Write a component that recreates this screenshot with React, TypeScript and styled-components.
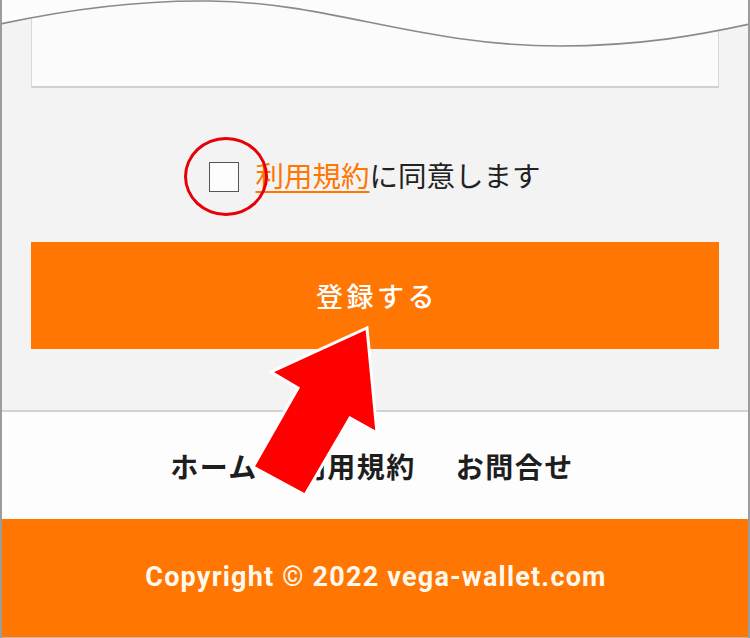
import React from "react";
import styled, { createGlobalStyle } from "styled-components";

const ORANGE = "#ff7602";

const Global = createGlobalStyle`
  html, body { margin: 0; padding: 0; background: #fcfcfc; }
  body { width: 750px; height: 638px; overflow: hidden; }
  * { box-sizing: border-box; }
`;

const Page = styled.div`
  position: relative;
  width: 750px;
  height: 638px;
  display: flex;
  flex-direction: column;
  border-left: 2px solid #9c9c9c;
  border-right: 2px solid #9c9c9c;
  font-family: "Noto Sans CJK JP", "Noto Sans", sans-serif;
  overflow: hidden;
`;

const FormSection = styled.section`
  height: 412px;
  flex: none;
  display: flex;
  flex-direction: column;
  align-items: stretch;
  padding: 0 29px;
  background: #f3f3f3;
  border-bottom: 2px solid #d2d2d2;
`;

const TextBox = styled.div`
  height: 88px;
  flex: none;
  background: #fbfbfb;
  border: 1px solid #d9d9d9;
  border-bottom: 2px solid #d0d0d0;
`;

const AgreeRow = styled.label`
  margin-top: 74px;
  height: 30px;
  display: flex;
  align-items: center;
  justify-content: center;
  gap: 16px;
  font-size: 28.5px;
  color: #222;
  line-height: 1;
`;

const Check = styled.span`
  width: 30px;
  height: 30px;
  flex: none;
  background: #fdfdfd;
  border: 1.5px solid #555;
`;

const Terms = styled.a`
  color: ${ORANGE};
  text-decoration: underline;
  text-decoration-thickness: 1.5px;
  text-underline-offset: 4px;
`;

const AgreeText = styled.span`
  display: inline-flex;
  align-items: center;
  transform: translateY(-2px);
`;

const SubmitButton = styled.button`
  margin-top: 50px;
  height: 107px;
  flex: none;
  border: none;
  background: ${ORANGE};
  color: #fff;
  font-family: "Noto Sans CJK JP", "Noto Sans", sans-serif;
  font-size: 27px;
  font-weight: 500;
  letter-spacing: 3.5px;
  padding: 0 0 0 4px;
`;

const Nav = styled.nav`
  height: 107px;
  flex: none;
  display: flex;
  align-items: center;
  justify-content: center;
  gap: 40px;
  background: #fdfdfd;
  padding-right: 6px;
`;

const NavLink = styled.a`
  font-size: 28px;
  font-weight: 700;
  color: #1e1e1e;
  letter-spacing: 1.5px;
  text-decoration: none;
`;

const Footer = styled.footer`
  flex: 1;
  display: flex;
  align-items: center;
  justify-content: center;
  background: ${ORANGE};
  border-bottom: 1px solid #b9b9b9;
`;

const Copy = styled.p`
  margin: 0;
  font-family: "Roboto", "Liberation Sans", sans-serif;
  font-weight: 700;
  font-size: 27px;
  letter-spacing: 1.2px;
  color: #fff8ec;
  padding: 0 0 2px 2px;
`;

const TornEdge = styled.svg`
  position: absolute;
  left: -2px;
  top: 0;
  width: 750px;
  height: 60px;
`;

const Circle = styled.div`
  position: absolute;
  left: 182px;
  top: 137px;
  width: 84px;
  height: 79px;
  border: 3px solid #e6000a;
  border-radius: 50%;
`;

const Arrow = styled.svg`
  position: absolute;
  left: -2px;
  top: 0;
  width: 750px;
  height: 638px;
  pointer-events: none;
`;

export default function App() {
  const wave =
    "M0,24 C70,9 140,0 210,1 C330,2 420,46 560,46 C640,46 700,35 750,24";
  return (
    <>
      <Global />
      <Page>
        <FormSection>
          <TextBox />
          <AgreeRow>
            <Check />
            <AgreeText>
              <Terms>利用規約</Terms>に同意します
            </AgreeText>
          </AgreeRow>
          <SubmitButton>登録する</SubmitButton>
        </FormSection>
        <Nav>
          <NavLink>ホーム</NavLink>
          <NavLink>利用規約</NavLink>
          <NavLink>お問合せ</NavLink>
        </Nav>
        <Footer>
          <Copy>Copyright © 2022 vega-wallet.com</Copy>
        </Footer>
        <TornEdge viewBox="0 0 750 60">
          <path d={`${wave} L750,0 L0,0 Z`} fill="#fcfcfc" />
          <path d={wave} fill="none" stroke="#8a8a8a" strokeWidth="1.6" />
        </TornEdge>
        <Circle />
        <Arrow viewBox="0 0 750 638">
          <polygon
            points="367,328 377,433 350,418 305,495 253,467 298,388 271,372"
            fill="#ff0000"
            stroke="#ffffff"
            strokeWidth="3"
            strokeLinejoin="miter"
          />
        </Arrow>
      </Page>
    </>
  );
}
